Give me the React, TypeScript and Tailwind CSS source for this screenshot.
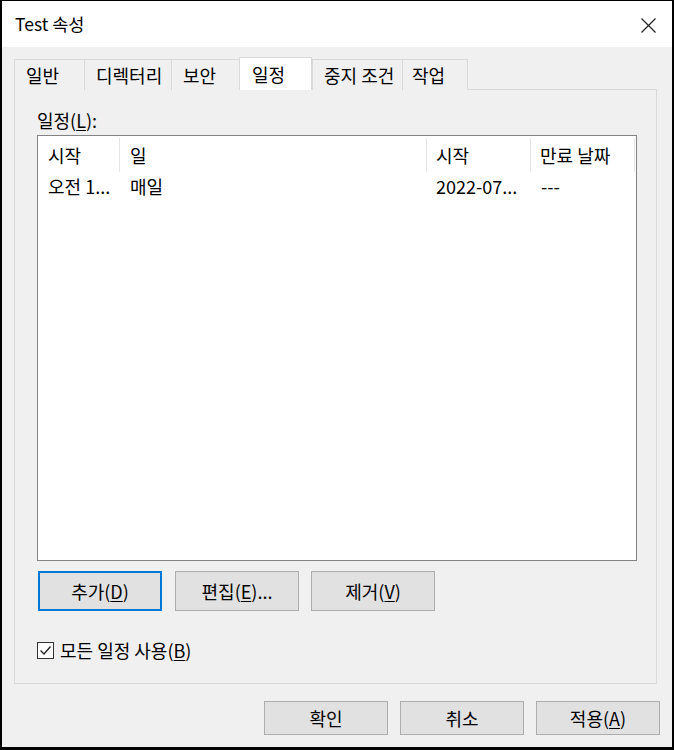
import React from 'react'

const font = { fontFamily: '"Noto Sans CJK KR", "Noto Sans", sans-serif' }

function Tab({ label, width, selected }: { label: string; width: string; selected?: boolean }) {
  return (
    <div
      className={
        selected
          ? `${width} h-[33px] bg-white border-t border-l border-r border-[#d9d9d9] pl-[12px] flex items-center`
          : `${width} h-[31px] bg-[#f0f0f0] border-t border-l border-[#d9d9d9] pl-[11px] flex items-center`
      }
    >
      {label}
    </div>
  )
}

function Button({ children, focused, className = '' }: { children: React.ReactNode; focused?: boolean; className?: string }) {
  return (
    <div
      className={`w-[124px] flex items-center justify-center bg-[#e1e1e1] ${
        focused ? 'border-2 border-[#0078d7]' : 'border border-[#adadad]'
      } ${className}`}
    >
      {children}
    </div>
  )
}

export default function App() {
  return (
    <div
      style={font}
      className="w-[674px] h-[750px] bg-[#f0f0f0] border-black border-l-2 border-r-2 border-t border-b-[3px] flex flex-col text-[18px] text-black leading-[22px]"
    >
      {/* Title bar */}
      <div className="h-[46px] bg-white flex items-center justify-between pl-[13px] pr-[16px]">
        <span className="text-[17.5px]">Test 속성</span>
        <svg width="15" height="15" viewBox="0 0 15 15" className="mt-[3px]">
          <path d="M0.5 0.5 L14.5 14.5 M14.5 0.5 L0.5 14.5" stroke="#222" strokeWidth="1.2" fill="none" />
        </svg>
      </div>

      <div className="flex-1 pl-[12px] pt-[11px] flex flex-col">
        {/* Tabs */}
        <div className="flex items-end h-[32px] -mb-px relative z-10">
          <Tab label="일반" width="w-[70px]" />
          <Tab label="디렉터리" width="w-[87px]" />
          <Tab label="보안" width="w-[68px]" />
          <Tab label="일정" width="w-[73px]" selected />
          <Tab label="중지 조건" width="w-[90px]" />
          <div className="w-[66px] h-[31px] bg-[#f0f0f0] border-t border-l border-r border-[#d9d9d9] pl-[9px] flex items-center">
            작업
          </div>
        </div>

        {/* Page */}
        <div className="w-[643px] h-[595px] border border-[#d9d9d9] pl-[22px] pt-[19px]">
          <div>
            일정(<u className="underline-offset-2">L</u>):
          </div>
          <div className="mt-[4px] w-[600px] h-[426px] border border-[#828282] bg-white">
            <div className="flex h-[36px] items-end">
              <div className="w-[82px] h-[34px] border-r border-[#e5e5e5] pl-[10px] flex items-center">시작</div>
              <div className="w-[307px] h-[34px] border-r border-[#e5e5e5] pl-[10px] flex items-center">일</div>
              <div className="w-[104px] h-[34px] border-r border-[#e5e5e5] pl-[9px] flex items-center">시작</div>
              <div className="w-[104px] h-[34px] border-r border-[#e5e5e5] pl-[9px] flex items-center">만료 날짜</div>
            </div>
            <div className="flex h-[27px] items-center">
              <div className="w-[82px] pl-[10px] whitespace-nowrap">오전 1...</div>
              <div className="w-[307px] pl-[10px]">매일</div>
              <div className="w-[104px] pl-[9px] whitespace-nowrap">2022-07...</div>
              <div className="w-[104px] pl-[10px]">---</div>
            </div>
          </div>

          <div className="flex mt-[10px] ml-px h-[40px] gap-[13px]">
            <Button focused>
              추가(<u className="underline-offset-2">D</u>)
            </Button>
            <Button>
              편집(<u className="underline-offset-2">E</u>)...
            </Button>
            <Button className="-ml-px">
              제거(<u className="underline-offset-2">V</u>)
            </Button>
          </div>

          <div className="flex items-center mt-[28px] gap-[6px]">
            <div className="w-[17px] h-[17px] border border-[#333] bg-white flex items-center justify-center">
              <svg width="13" height="13" viewBox="0 0 13 13">
                <path d="M1.5 6.5 L5 10 L11.5 2.5" stroke="#222" strokeWidth="1.3" fill="none" />
              </svg>
            </div>
            <span>
              모든 일정 사용(<u className="underline-offset-2">B</u>)
            </span>
          </div>
        </div>

        {/* Dialog buttons */}
        <div className="flex justify-end gap-[12px] pr-[12px] mt-[17px] h-[34px]">
          <Button>확인</Button>
          <Button>취소</Button>
          <Button>
            적용(<u className="underline-offset-2">A</u>)
          </Button>
        </div>
      </div>
    </div>
  )
}
